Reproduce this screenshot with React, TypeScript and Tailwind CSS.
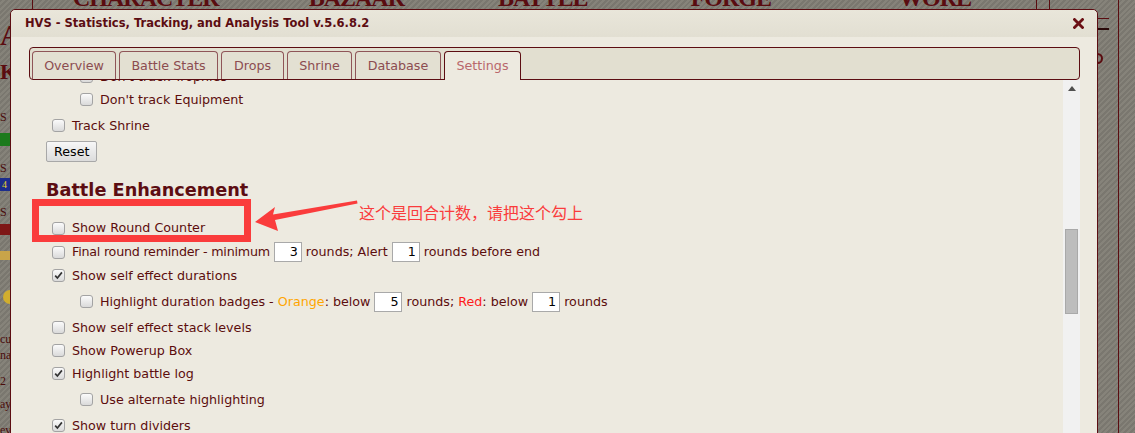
import type { ReactNode } from 'react';

const tabs = [
  { label: 'Overview', w: 'w-[84px]' },
  { label: 'Battle Stats', w: 'w-[99px]' },
  { label: 'Drops', w: 'w-[63px]' },
  { label: 'Shrine', w: 'w-[65px]' },
  { label: 'Database', w: 'w-[86px]' },
];

function Check({ checked = false }: { checked?: boolean }) {
  return (
    <span className="flex h-[13px] w-[13px] shrink-0 items-center justify-center rounded-[3px] border border-[#a3a3a3] bg-gradient-to-b from-[#fbfbfb] to-[#dadada]">
      {checked && (
        <svg width="9" height="9" viewBox="0 0 9 9">
          <path d="M1.2 4.6 L3.4 7 L7.9 1.4" fill="none" stroke="#333" strokeWidth="1.7" />
        </svg>
      )}
    </span>
  );
}

function Row({
  checked,
  sub,
  tall,
  children,
}: {
  checked?: boolean;
  sub?: boolean;
  tall?: boolean;
  children: ReactNode;
}) {
  return (
    <div
      className={`flex items-center gap-[7px] whitespace-nowrap ${sub ? 'pl-[34px]' : 'pl-[6px]'} ${tall ? 'h-[24px]' : 'h-[23px]'}`}
    >
      <Check checked={checked} />
      <div className="flex items-center">{children}</div>
    </div>
  );
}

function NumBox({ value }: { value: string }) {
  return (
    <span className="mx-[4px] flex h-[20px] w-[28px] items-center justify-end border border-[#a9a9a9] bg-white pr-[3px] text-black">
      {value}
    </span>
  );
}

function Backdrop() {
  return (
    <>
      {/* page menu words behind the dialog */}
      <div className="absolute left-0 top-[-14px] flex h-[24px] font-['Liberation_Serif',serif] text-[24px] font-bold leading-[24px] text-[#5a0c10]">
        <span className="ml-[73px] tracking-[-1px]">CHARACTER</span>
        <span className="ml-[90px] tracking-[-1px]">BAZAAR</span>
        <span className="ml-[94px] tracking-[-1px]">BATTLE</span>
        <span className="ml-[103px] tracking-[-1px]">FORGE</span>
        <span className="ml-[128px] tracking-[-1px]">WORL</span>
      </div>
      <div className="absolute left-[32px] top-0 h-[10px] w-px bg-[#5a0c10]" />
      <div className="absolute left-[1036px] top-0 h-[10px] w-[14px] border-x border-[#5a0c10]" />
      <div className="absolute left-[1118px] top-0 h-[433px] w-px bg-[#5a0c10]" />
      <div className="absolute left-[1097px] top-[18px] h-px w-[12px] bg-[#5a0c10]" />
      <div className="absolute left-[1097px] top-[28px] h-[2px] w-[12px] bg-[#2a0a0a]" />
      <div className="absolute left-[1092px] top-[53px] h-[11px] w-[11px] rounded-full border-2 border-[#5a0c10]" />

      {/* left strip of the page */}
      <div className="absolute left-0 top-0 flex w-[10px] flex-col font-['Liberation_Serif',serif] text-[12px] leading-[14px] text-[#4a0c0c]">
        <span className="mt-[18px] text-[30px] font-bold leading-[34px] text-[#5a0c10]">A</span>
        <span className="mt-[8px] text-[22px] font-bold leading-[24px] text-[#5a0c10]">K</span>
        <span className="mt-[26px]">S</span>
        <span className="mt-[9px] h-[13px] bg-[#1c7a1c]" />
        <span className="mt-[15px]">S</span>
        <span className="mt-[3px] h-[13px] bg-[#1d2d8c] pl-[2px] text-[10px] leading-[13px] text-[#e8d22a]">4</span>
        <span className="mt-[14px]">S</span>
        <span className="mt-[5px] h-[11px] bg-[#7e1616]" />
        <span className="mt-[16px] h-[9px] bg-[#c9a449]" />
        <span className="ml-[3px] mt-[30px] h-[14px] w-[14px] rounded-full bg-[#d1ae2e]" />
        <span className="mt-[28px]">cu</span>
        <span className="mt-[2px]">na</span>
        <span className="mt-[12px]">2</span>
        <span className="mt-[9px]">ay</span>
        <span className="mt-[12px]">ev</span>
      </div>
    </>
  );
}

export default function App() {
  return (
    <div className="relative h-[433px] w-[1135px] overflow-hidden bg-[repeating-linear-gradient(135deg,#7a776f_0px,#7a776f_2px,#86837a_2px,#86837a_4px)] font-['DejaVu_Sans',sans-serif]">
      <Backdrop />

      {/* dialog */}
      <div className="absolute left-[10px] top-[9px] flex h-[450px] w-[1088px] flex-col rounded-t-[5px] border border-[#5c0d12] bg-[#edeae0]">
        <div className="flex h-[27px] shrink-0 items-center justify-between rounded-t-[5px] bg-gradient-to-b from-[#e9e6da] to-[#e2dfd2] pl-[14px] pr-[13px]">
          <span className="text-[11.5px] font-bold text-[#5c0d12]">
            HVS - Statistics, Tracking, and Analysis Tool v.5.6.8.2
          </span>
          <svg width="11" height="11" viewBox="0 0 11 11">
            <path d="M1.5 1.5 L9.5 9.5 M9.5 1.5 L1.5 9.5" stroke="#6b0f14" strokeWidth="2.8" strokeLinecap="square" />
          </svg>
        </div>

        <div className="flex min-h-0 flex-1 flex-col pl-[18px] pr-[17px] pt-[10px]">
          {/* tabs */}
          <div className="flex h-[33px] shrink-0 items-end gap-[3px] rounded-[4px] border border-[#5c0d12] bg-[#e2dfd0] pl-[2px] text-[12.7px]">
            {tabs.map(t => (
              <div
                key={t.label}
                className={`flex h-[28px] items-center justify-center rounded-t-[4px] border border-b-0 border-[#8f5558] bg-[#e3e0d2] text-[#8c4c50] ${t.w}`}
              >
                {t.label}
              </div>
            ))}
            <div className="mb-[-1px] flex h-[29px] w-[77px] items-center justify-center rounded-t-[4px] border border-b-0 border-[#5c0d12] bg-[#edeae0] text-[#b9676c]">
              Settings
            </div>
          </div>

          {/* settings body */}
          <div className="flex min-h-0 flex-1">
            <div className="min-w-0 flex-1 overflow-hidden pl-[17px] text-[12.7px] text-[#5c0d0d]">
              <div className="mt-[-18px] flex flex-col">
                <div className="flex flex-col py-[3px]">
                  <Row sub>Don't track Trophies</Row>
                  <Row sub>Don't track Equipment</Row>
                </div>
                <Row>Track Shrine</Row>
                <div className="mt-[4px] flex">
                  <button className="flex h-[21px] items-center rounded-[2px] border border-[#a8a8a8] bg-gradient-to-b from-[#f7f7f7] to-[#dcdcdc] px-[7px] text-black">
                    Reset
                  </button>
                </div>
                <h2 className="mb-[16px] mt-[18px] text-[17.7px] font-bold leading-[20px] text-[#5c0d12]">
                  Battle Enhancement
                </h2>
                <Row tall>Show Round Counter</Row>
                <Row tall>
                  <span className="tracking-[-0.23px]">Final round reminder - minimum</span>
                  <NumBox value="3" />
                  <span>rounds; Alert</span>
                  <NumBox value="1" />
                  <span>rounds before end</span>
                </Row>
                <Row checked>Show self effect durations</Row>
                <div className="flex flex-col py-[3px]">
                  <Row sub>
                    <span>
                      Highlight duration badges - <span className="text-[#ffa500]">Orange</span>: below
                    </span>
                    <NumBox value="5" />
                    <span>
                      rounds; <span className="text-[#ff1a1a]">Red</span>: below
                    </span>
                    <NumBox value="1" />
                    <span>rounds</span>
                  </Row>
                </div>
                <Row>Show self effect stack levels</Row>
                <Row>Show Powerup Box</Row>
                <Row checked>Highlight battle log</Row>
                <div className="flex flex-col py-[3px]">
                  <Row sub>Use alternate highlighting</Row>
                </div>
                <Row checked>Show turn dividers</Row>
              </div>
            </div>

            {/* scrollbar */}
            <div className="flex w-[17px] shrink-0 flex-col bg-[#f1f1f1]">
              <div className="flex h-[17px] items-center justify-center">
                <svg width="8" height="5" viewBox="0 0 8 5">
                  <path d="M0 5 L4 0 L8 5 Z" fill="#505050" />
                </svg>
              </div>
              <div className="ml-[2px] mt-[132px] h-[85px] w-[13px] border border-[#a9a9a9] bg-[#bdbdbd]" />
            </div>
          </div>
        </div>
      </div>

      {/* red annotation drawn over the screenshot */}
      <div className="absolute left-[32px] top-[199px] h-[43px] w-[219px] border-[7px] border-[#fa3c3c]" />
      <svg className="absolute left-0 top-0" width="1135" height="433" viewBox="0 0 1135 433">
        <polygon
          points="255,222 275,207 273,214.5 357,200.5 357.5,203.5 275,220 278,231"
          fill="#fa3c3c"
        />
      </svg>
      <div className="absolute left-[359px] top-[202px] font-['Noto_Sans_CJK_SC',sans-serif] text-[16px] leading-[20px] text-[#fa3c3c]">
        这个是回合计数，请把这个勾上
      </div>
    </div>
  );
}
